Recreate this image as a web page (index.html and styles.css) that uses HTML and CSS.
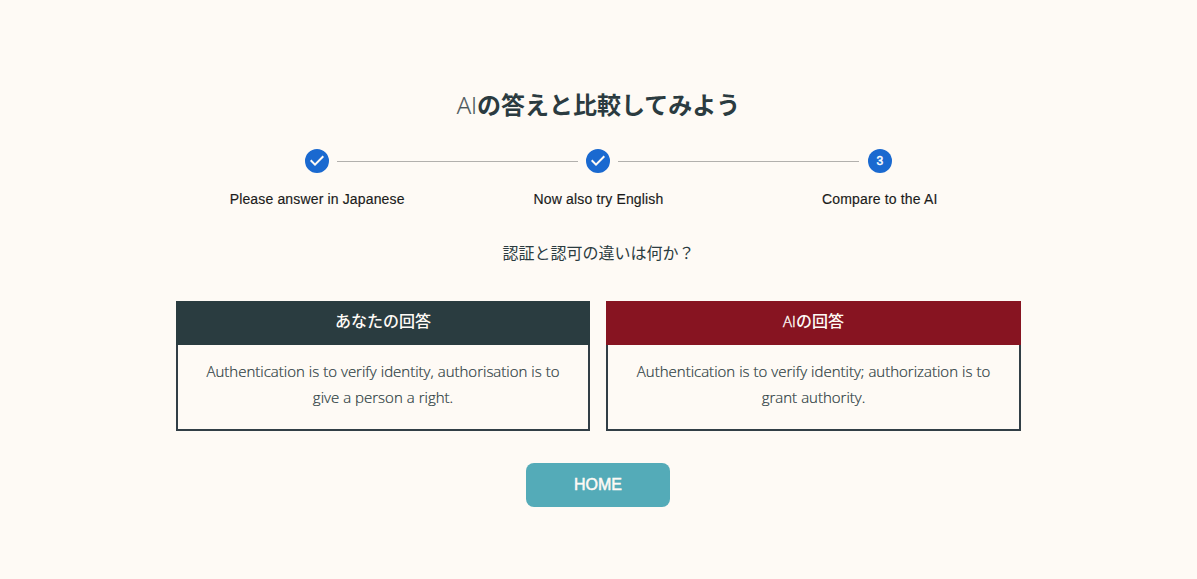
FILE: index.html
```html
<!DOCTYPE html>
<html lang="ja">
<head>
<meta charset="utf-8">
<title>AIの答えと比較してみよう</title>
<link rel="stylesheet" href="styles.css">
</head>
<body>
<main class="page">
  <h1 class="title"><span class="title-latin">AI</span>の答えと比較してみよう</h1>
  <ol class="stepper">
    <li class="step">
      <svg class="step-icon" viewBox="0 0 24 24"><path d="M12 0a12 12 0 1 0 0 24 12 12 0 0 0 0-24zm-2 17l-5-5 1.4-1.4 3.6 3.6 7.6-7.6L19 8l-9 9z"/></svg>
      <span class="step-label">Please answer in Japanese</span>
    </li>
    <li class="step">
      <svg class="step-icon" viewBox="0 0 24 24"><path d="M12 0a12 12 0 1 0 0 24 12 12 0 0 0 0-24zm-2 17l-5-5 1.4-1.4 3.6 3.6 7.6-7.6L19 8l-9 9z"/></svg>
      <span class="step-label">Now also try English</span>
    </li>
    <li class="step">
      <span class="step-icon step-number">3</span>
      <span class="step-label">Compare to the AI</span>
    </li>
  </ol>
  <p class="question">認証と認可の違いは何か？</p>
  <div class="answers">
    <section class="answer">
      <h2 class="answer-head">あなたの回答</h2>
      <p class="answer-body">Authentication is to verify identity, authorisation is to<br>give a person a right.</p>
    </section>
    <section class="answer">
      <h2 class="answer-head answer-head-ai"><span class="head-latin">AI</span>の回答</h2>
      <p class="answer-body">Authentication is to verify identity; authorization is to<br>grant authority.</p>
    </section>
  </div>
  <button class="home">HOME</button>
</main>
</body>
</html>
```
FILE: styles.css
```css
* {
  box-sizing: border-box;
}

body {
  margin: 0;
  background: #fefaf5;
  color: #2b3b40;
  font-family: "Open Sans", "Noto Sans CJK JP", sans-serif;
  font-weight: 300;
}

.page {
  width: 845px;
  margin: 0 auto;
  padding-top: 87px;
  display: flex;
  flex-direction: column;
  align-items: center;
}

.title {
  margin: 0;
  font-size: 24px;
  line-height: 36px;
  font-weight: 700;
  white-space: nowrap;
}

.title-latin {
  font-weight: 300;
  color: #4a565a;
  -webkit-text-stroke: 0.2px;
}

.stepper {
  width: 844px;
  margin: 26px 0 0;
  padding: 0;
  display: flex;
  list-style: none;
}

.step {
  position: relative;
  flex: 1;
  display: flex;
  flex-direction: column;
  align-items: center;
  font-family: "Liberation Sans", sans-serif;
}

.step + .step::before {
  content: "";
  position: absolute;
  top: 12px;
  left: calc(-50% + 19.6px);
  right: calc(50% + 20.4px);
  border-top: 1px solid #b2b0ad;
}

.step-icon {
  width: 24px;
  height: 24px;
  fill: #1a69d0;
}

.step-number {
  border-radius: 50%;
  background: #1a69d0;
  color: #fff;
  font-size: 12px;
  line-height: 24px;
  font-weight: 400;
  text-align: center;
  -webkit-text-stroke: 0.5px;
}

.step-label {
  margin-top: 16px;
  color: #1b1b1a;
  font-size: 14px;
  line-height: 20px;
  font-weight: 400;
  letter-spacing: 0.15px;
  white-space: nowrap;
  -webkit-text-stroke: 0.15px;
}

.question {
  margin: 32px 0 0;
  font-size: 16px;
  line-height: 24px;
  font-weight: 400;
}

.answers {
  width: 100%;
  margin-top: 36px;
  display: grid;
  grid-template-columns: 414px 415px;
  gap: 16px;
}

.answer {
  height: 130px;
  border: 2px solid #323e46;
  border-top: 0;
}

.answer-head {
  height: 44px;
  margin: 0 -2px;
  background: #2a3c40;
  color: #fefaf5;
  font-size: 16px;
  line-height: 40px;
  font-weight: 500;
  text-align: center;
}

.answer-head-ai {
  background: #871421;
}

.head-latin {
  font-size: 15px;
  font-weight: 300;
  -webkit-text-stroke: 0.4px;
}

.answer-body {
  margin: 13px 0 0;
  font-size: 15px;
  line-height: 26px;
  text-align: center;
  white-space: nowrap;
  word-spacing: 0.1px;
  -webkit-text-stroke: 0.2px;
}

.home {
  width: 144px;
  height: 44px;
  margin: 32px 1px 0 0;
  padding: 0;
  border: 0;
  border-radius: 8px;
  background: #54abb8;
  color: #fefaf5;
  font: 400 16px/44px "Liberation Sans", sans-serif;
  -webkit-text-stroke: 0.5px;
}
```
